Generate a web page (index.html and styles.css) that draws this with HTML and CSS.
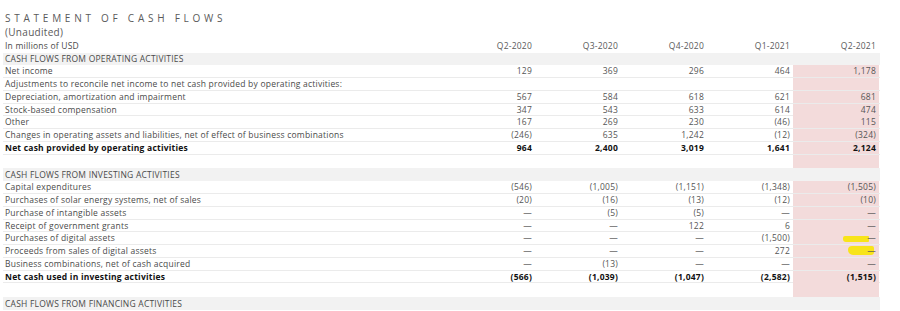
FILE: index.html
```
<!DOCTYPE html>
<html lang="en">
<head>
<meta charset="utf-8">
<title>Statement of Cash Flows</title>
<link rel="stylesheet" href="styles.css">
</head>
<body>
<div class="statement">
  <h1 class="title">STATEMENT OF CASH FLOWS</h1>
  <div class="subtitle">(Unaudited)</div>
  <div class="table">
    <div class="row head"><span class="label">In millions of USD</span><span class="num">Q2-2020</span><span class="num">Q3-2020</span><span class="num">Q4-2020</span><span class="num">Q1-2021</span><span class="num">Q2-2021</span></div>
    <div class="row section first"><span class="label">CASH FLOWS FROM OPERATING ACTIVITIES</span></div>
    <div class="row"><span class="label">Net income</span><span class="num">129</span><span class="num">369</span><span class="num">296</span><span class="num">464</span><span class="num cur">1,178</span></div>
    <div class="row"><span class="label">Adjustments to reconcile net income to net cash provided by operating activities:</span><span class="num"></span><span class="num"></span><span class="num"></span><span class="num"></span><span class="num cur"></span></div>
    <div class="row"><span class="label">Depreciation, amortization and impairment</span><span class="num">567</span><span class="num">584</span><span class="num">618</span><span class="num">621</span><span class="num cur">681</span></div>
    <div class="row"><span class="label">Stock-based compensation</span><span class="num">347</span><span class="num">543</span><span class="num">633</span><span class="num">614</span><span class="num cur">474</span></div>
    <div class="row"><span class="label">Other</span><span class="num">167</span><span class="num">269</span><span class="num">230</span><span class="num">(46)</span><span class="num cur">115</span></div>
    <div class="row"><span class="label">Changes in operating assets and liabilities, net of effect of business combinations</span><span class="num">(246)</span><span class="num">635</span><span class="num">1,242</span><span class="num">(12)</span><span class="num cur">(324)</span></div>
    <div class="row total"><span class="label">Net cash provided by operating activities</span><span class="num">964</span><span class="num">2,400</span><span class="num">3,019</span><span class="num">1,641</span><span class="num cur">2,124</span></div>
    <div class="row blank"><span class="label"></span><span class="num"></span><span class="num"></span><span class="num"></span><span class="num"></span><span class="num cur"></span></div>
    <div class="row section"><span class="label">CASH FLOWS FROM INVESTING ACTIVITIES</span></div>
    <div class="row"><span class="label">Capital expenditures</span><span class="num">(546)</span><span class="num">(1,005)</span><span class="num">(1,151)</span><span class="num">(1,348)</span><span class="num cur">(1,505)</span></div>
    <div class="row"><span class="label">Purchases of solar energy systems, net of sales</span><span class="num">(20)</span><span class="num">(16)</span><span class="num">(13)</span><span class="num">(12)</span><span class="num cur">(10)</span></div>
    <div class="row"><span class="label">Purchase of intangible assets</span><span class="num">—</span><span class="num">(5)</span><span class="num">(5)</span><span class="num">—</span><span class="num cur">—</span></div>
    <div class="row"><span class="label">Receipt of government grants</span><span class="num">—</span><span class="num">—</span><span class="num">122</span><span class="num">6</span><span class="num cur">—</span></div>
    <div class="row"><span class="label">Purchases of digital assets</span><span class="num">—</span><span class="num">—</span><span class="num">—</span><span class="num">(1,500)</span><span class="num cur"><span class="marker marker-a"></span><span class="val">—</span></span></div>
    <div class="row"><span class="label">Proceeds from sales of digital assets</span><span class="num">—</span><span class="num">—</span><span class="num">—</span><span class="num">272</span><span class="num cur"><span class="marker marker-b"></span><span class="val">—</span></span></div>
    <div class="row"><span class="label">Business combinations, net of cash acquired</span><span class="num">—</span><span class="num">(13)</span><span class="num">—</span><span class="num">—</span><span class="num cur">—</span></div>
    <div class="row total"><span class="label">Net cash used in investing activities</span><span class="num">(566)</span><span class="num">(1,039)</span><span class="num">(1,047)</span><span class="num">(2,582)</span><span class="num cur">(1,515)</span></div>
    <div class="row blank"><span class="label"></span><span class="num"></span><span class="num"></span><span class="num"></span><span class="num"></span><span class="num cur"></span></div>
    <div class="row section"><span class="label">CASH FLOWS FROM FINANCING ACTIVITIES</span></div>
  </div>
</div>
</body>
</html>
```

FILE: styles.css
```
html, body {
  margin: 0;
  padding: 0;
  background: #ffffff;
}

.statement {
  padding: 11.5px 0 0 3px;
  font-family: "Open Sans", "Lato", sans-serif;
  color: #4a4a4a;
}

.title {
  margin: 0;
  padding-left: 2px;
  font-size: 10px;
  line-height: 13px;
  font-weight: 400;
  letter-spacing: 3.75px;
  color: #5a5a5a;
}

.subtitle {
  padding-left: 2px;
  font-size: 10px;
  line-height: 14.5px;
  letter-spacing: 0.3px;
  color: #5a5a5a;
}

.table {
  margin-top: 0.75px;
  width: 877px;
  font-size: 8.5px;
  letter-spacing: 0.22px;
}

.row {
  display: grid;
  grid-template-columns: 446px repeat(5, 86px);
  height: 12.75px;
  line-height: 12px;
  box-sizing: border-box;
  border-bottom: 1px solid rgba(0, 0, 0, 0.08);
}

.row.head,
.row.section,
.row.blank {
  border-bottom: none;
}

.row.head {
  line-height: 12.75px;
}

.row.blank {
  height: 13.75px;
}

.row.section {
  display: block;
  height: 13px;
  line-height: 14px;
  background: #f2f2f2;
  color: #4a4a4a;
}

.row.section.first {
  height: 12.75px;
  line-height: 12.75px;
}

.label {
  padding-left: 2px;
  white-space: nowrap;
}

.num {
  text-align: right;
  padding-right: 3px;
  color: #555555;
  white-space: nowrap;
}

.head .num {
  color: #5a5a5a;
}

.cur {
  background: #f3dbdb;
  position: relative;
}

.total .label,
.total .num {
  font-weight: 700;
  color: #111111;
}

.val {
  position: relative;
  z-index: 1;
}

.marker {
  position: absolute;
  z-index: 0;
  background: #f8e41a;
  filter: blur(0.4px);
}

.marker-a {
  left: 50px;
  top: 4px;
  width: 26px;
  height: 6px;
  border-radius: 2px 1px 1px 3px;
}

.marker-b {
  left: 55px;
  top: 1px;
  width: 26px;
  height: 9px;
  border-radius: 4px 2px 3px 5px;
}
```
